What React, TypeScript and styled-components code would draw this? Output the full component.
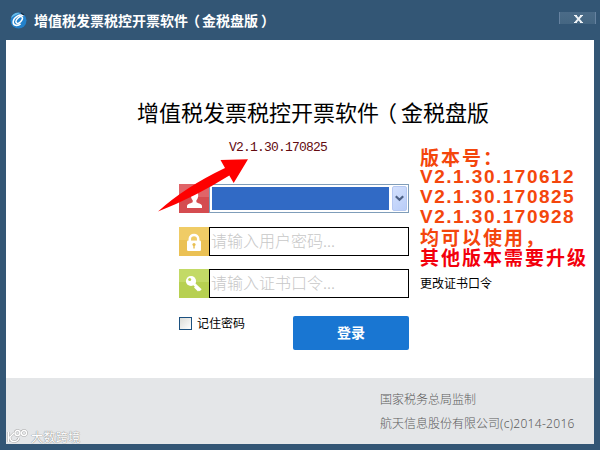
import { useState } from 'react';
import styled, { createGlobalStyle } from 'styled-components';

const GlobalStyle = createGlobalStyle`
  * {
    box-sizing: border-box;
  }

  body {
    margin: 0;
    font-family: "Liberation Sans", "Noto Sans CJK SC", sans-serif;
  }
`;

const Window = styled.div`
  position: relative;
  width: 600px;
  height: 450px;
  padding: 0 6px 6px;
  display: flex;
  flex-direction: column;
  background: #335675;
  overflow: hidden;
  white-space: nowrap;
`;

const TitleBar = styled.header`
  flex: none;
  height: 40px;
  display: flex;
  align-items: center;
  padding-left: 4px;
`;

const TitleText = styled.h1`
  margin: -1px 0 0 7px;
  font: bold 14px/20px "Noto Sans CJK SC", sans-serif;
  color: #fff;
`;

/* Parentheses sit centred in their cell, not against its edge */
const Paren = styled.span<{ $shift: string }>`
  position: relative;
  left: ${({ $shift }) => $shift};
`;

/* Close button */
const CloseButton = styled.button`
  align-self: flex-start;
  width: 37px;
  height: 12px;
  margin: 12px -2px 0 auto;
  padding: 1px 0 0 2px;
  display: flex;
  align-items: center;
  justify-content: center;
  border: 0;
  border-left: 1px solid #6682a0;
  border-right: 1px solid #6682a0;
  background: linear-gradient(#4b6b88, #456682);
`;

const Content = styled.main`
  flex: 1;
  display: flex;
  flex-direction: column;
  background: #fff;
`;

const Heading = styled.h2`
  margin: 55px 0 0 131px;
  font: 400 22px/32px "Noto Sans CJK SC", sans-serif;
  color: #000;
`;

const Version = styled.p`
  margin: 12px 0 0 223px;
  font: 13px/18px "Liberation Mono", monospace;
  letter-spacing: -0.8px;
  color: #640b10;
`;

const Columns = styled.div`
  display: flex;
  align-items: flex-start;
  padding-left: 173px;
`;

const Form = styled.form`
  width: 230px;
  margin-top: 27px;
`;

const Field = styled.div<{ $gap?: number }>`
  display: flex;
  height: 29px;
  margin-top: ${({ $gap }) => $gap || 0}px;
`;

const IconBox = styled.span<{ $top: string; $bottom: string }>`
  width: 30px;
  flex: none;
  display: flex;
  background: linear-gradient(${({ $top, $bottom }) => `${$top} 45%, ${$bottom} 45%`});
`;

const Input = styled.input`
  width: 200px;
  padding: 0 0 4px 1px;
  border: 1px solid #000;
  border-radius: 0;
  outline: 0;
  background: #fff;
  font: 300 16px/24px "Noto Sans CJK SC", sans-serif;

  &::placeholder {
    color: #c8c8c8;
    opacity: 1;
  }
`;

/* User select */
const Select = styled.div`
  width: 200px;
  display: flex;
  justify-content: space-between;
  padding: 1px;
  border: 1px solid #7f9db9;
  background: #fff;
`;

const Selected = styled.span`
  width: 177px;
  margin: 1px;
  background: #316ac5;
`;

const DropButton = styled.span`
  width: 15px;
  display: flex;
  align-items: center;
  justify-content: center;
  border-radius: 2px;
  border: 1px solid #b5c8f2;
  background: linear-gradient(135deg, #d3e0fd, #b9cdf8);
`;

const Actions = styled.div`
  display: flex;
  justify-content: space-between;
  margin-top: 18px;
`;

const Remember = styled.label`
  display: flex;
  height: 14px;
  align-items: center;
  font: 12px/14px "Noto Sans CJK SC", sans-serif;
  color: #000;
`;

const Checkbox = styled.input`
  appearance: none;
  width: 13px;
  height: 13px;
  margin: 1px 5px 0 0;
  border: 1px solid #1c5180;
  background: linear-gradient(135deg, #dcdcd7, #fff);

  &:checked {
    background: #1c5180;
  }
`;

const LoginButton = styled.button`
  width: 116px;
  height: 34px;
  padding: 0 0 2px;
  border: 0;
  border-radius: 2px;
  background: #1976d2;
  font: bold 14px/32px "Noto Sans CJK SC", sans-serif;
  color: #fff;
`;

const Side = styled.div`
  margin: -10px 0 0 11px;
`;

const Notice = styled.p`
  margin: 0;
  font: bold 19px/20px "Noto Sans CJK SC", sans-serif;
  letter-spacing: 2px;
  color: #f4460c;
`;

const NoticeVersion = styled.span`
  display: block;
  font-family: "Liberation Sans", sans-serif;
  letter-spacing: 1.5px;
  line-height: 20px;
`;

const Warning = styled.strong`
  display: block;
  font-weight: bold;
  color: #f3000c;
`;

const ChangeLink = styled.a`
  display: block;
  margin-top: 7px;
  font: 12px/18px "Noto Sans CJK SC", sans-serif;
  color: #000;
`;

const Footer = styled.footer`
  flex: none;
  height: 66px;
  padding: 9px 0 0 374px;
  background: #e4e6e8;
  font: 300 12px/24px "Noto Sans CJK SC", sans-serif;
  color: #5c5c5c;
`;

const Copyright = styled.span`
  font-family: "Noto Sans", sans-serif;
  letter-spacing: 0.3px;
`;

const Arrow = styled.svg`
  position: absolute;
  left: 150px;
  top: 150px;
`;

const Watermark = styled.div`
  position: absolute;
  left: 7px;
  bottom: 5px;
  display: flex;
  align-items: center;
  gap: 2px;
  font: 12px/16px "Noto Sans CJK SC", sans-serif;
  letter-spacing: 0.4px;
  color: #fff;
  text-shadow: 0 0 1px #888, 0 0 1px #888;
`;

const notices = ['V2.1.30.170612', 'V2.1.30.170825', 'V2.1.30.170928'];

const Logo = () => (
  <svg width="17" height="17" viewBox="0 0 17 17">
    <circle cx="8.5" cy="8.5" r="8" fill="#2381cb" />
    <path d="M1 6C2 2 6 0 10 1L4 4Z" fill="#69bce9" />
    <path d="M13.5 4C10 1.5 4 5 3.2 9.5c-.6 4 4.2 5 7.4 2.4" fill="none" stroke="#fff" strokeWidth="1.5" />
    <ellipse cx="9.2" cy="8" rx="4" ry="2.2" transform="rotate(-48 9.2 8)" fill="none" stroke="#fff" strokeWidth="1.5" />
    <path d="M11 1l3 2" stroke="#132c43" strokeWidth="1.3" />
  </svg>
);

const UserIcon = () => (
  <svg width="30" height="29" viewBox="0 0 30 29">
    <path
      d="M15.5 7.5c-2.7 0-4 1.8-3.6 4.6.2 2 .9 3.3 1.8 4.2v1.6c-.6 1.3-5.7 1.5-5.7 4V24h15v-2.1c0-2.5-5-2.7-5.6-4v-1.6c1-.9 1.6-2.2 1.8-4.2.3-2.8-1-4.6-3.7-4.6Z"
      fill="#fff"
    />
  </svg>
);

const LockIcon = () => (
  <svg width="30" height="29" viewBox="0 0 30 29">
    <path d="M10.8 14v-2.2c0-5 8.4-5 8.4 0V14" fill="none" stroke="#fff" strokeWidth="2.5" />
    <rect x="8" y="13.5" width="14" height="10.5" rx="1.2" fill="#fff" />
    <circle cx="15" cy="17.5" r="1.6" fill="#e9bf52" />
    <path d="M15 17.5v4" stroke="#e9bf52" strokeWidth="1.4" />
  </svg>
);

const KeyIcon = () => (
  <svg width="30" height="29" viewBox="0 0 30 29">
    <circle cx="12" cy="12" r="5.1" fill="#fff" />
    <path d="M14.5 14.5l7.2 6.8M16 17.5l4 4" stroke="#fff" strokeWidth="2.8" />
    <circle cx="10.7" cy="10.4" r="1.5" fill="#b9d354" />
  </svg>
);

const App = () => {
  const [remember, setRemember] = useState(false);

  return (
    <>
      <GlobalStyle />
      <Window>
        <TitleBar>
          <Logo />
          <TitleText>
            增值税发票税控开票软件<Paren $shift="-2px">（</Paren>金税盘版<Paren $shift="3px">）</Paren>
          </TitleText>
          <CloseButton type="button" aria-label="关闭">
            <svg width="9" height="8" viewBox="0 0 9 8">
              <path d="M1.5 .7l6 6.6M7.5 .7l-6 6.6" stroke="#eef3f7" strokeWidth="2" />
              <path d="M0 .5h3M6 .5h3M0 7.5h3M6 7.5h3" stroke="#eef3f7" />
            </svg>
          </CloseButton>
        </TitleBar>

        <Content>
          <Heading>增值税发票税控开票软件<Paren $shift="-4px">（</Paren>金税盘版</Heading>
          <Version>V2.1.30.170825</Version>
          <Columns>
            <Form>
              <Field>
                <IconBox $top="#e06468" $bottom="#d54c50"><UserIcon /></IconBox>
                <Select>
                  <Selected />
                  <DropButton>
                    <svg width="9" height="7" viewBox="0 0 9 7">
                      <path d="M.8 1.2l3.7 3.6 3.7-3.6" fill="none" stroke="#4d6185" strokeWidth="2.2" />
                    </svg>
                  </DropButton>
                </Select>
              </Field>
              <Field $gap={14}>
                <IconBox $top="#f0cc66" $bottom="#ebc154"><LockIcon /></IconBox>
                <Input type="text" placeholder="请输入用户密码..." />
              </Field>
              <Field $gap={13}>
                <IconBox $top="#c3da66" $bottom="#b7d051"><KeyIcon /></IconBox>
                <Input type="text" placeholder="请输入证书口令..." />
              </Field>
              <Actions>
                <Remember>
                  <Checkbox
                    type="checkbox"
                    checked={remember}
                    onChange={(e) => setRemember(e.target.checked)}
                  />
                  记住密码
                </Remember>
                <LoginButton type="button">登录</LoginButton>
              </Actions>
            </Form>

            <Side>
              <Notice>
                版本号：
                {notices.map((item) => (
                  <NoticeVersion key={item}>{item}</NoticeVersion>
                ))}
                均可以使用，
                <Warning>其他版本需要升级</Warning>
              </Notice>
              <ChangeLink>更改证书口令</ChangeLink>
            </Side>
          </Columns>
        </Content>

        <Footer>
          <div>国家税务总局监制</div>
          <div>航天信息股份有限公司<Copyright>(c)2014-2016</Copyright></div>
        </Footer>

        <Arrow width="100" height="64" viewBox="0 0 100 64">
          <path d="M8 61.5Q35 37 75 18L70.5 10 98 9.2 83.7 33 79.3 25.5Q45 47 8 61.5Z" fill="#fe0000" />
        </Arrow>

        <Watermark>
          <svg width="22" height="16" viewBox="0 0 22 16" fill="none">
            <g stroke="#aaa" strokeWidth="2.4">
              <path d="M1.5 3v10M7 4L3 8c0 6 7 6 9 1" />
              <circle cx="10.5" cy="4" r="2.5" />
              <circle cx="17" cy="4" r="2.5" />
            </g>
            <g stroke="#fff" strokeWidth="1.4">
              <path d="M1.5 3v10M7 4L3 8c0 6 7 6 9 1" />
              <circle cx="10.5" cy="4" r="2.5" />
              <circle cx="17" cy="4" r="2.5" />
            </g>
          </svg>
          大数跨境
        </Watermark>
      </Window>
    </>
  );
};

export default App;
